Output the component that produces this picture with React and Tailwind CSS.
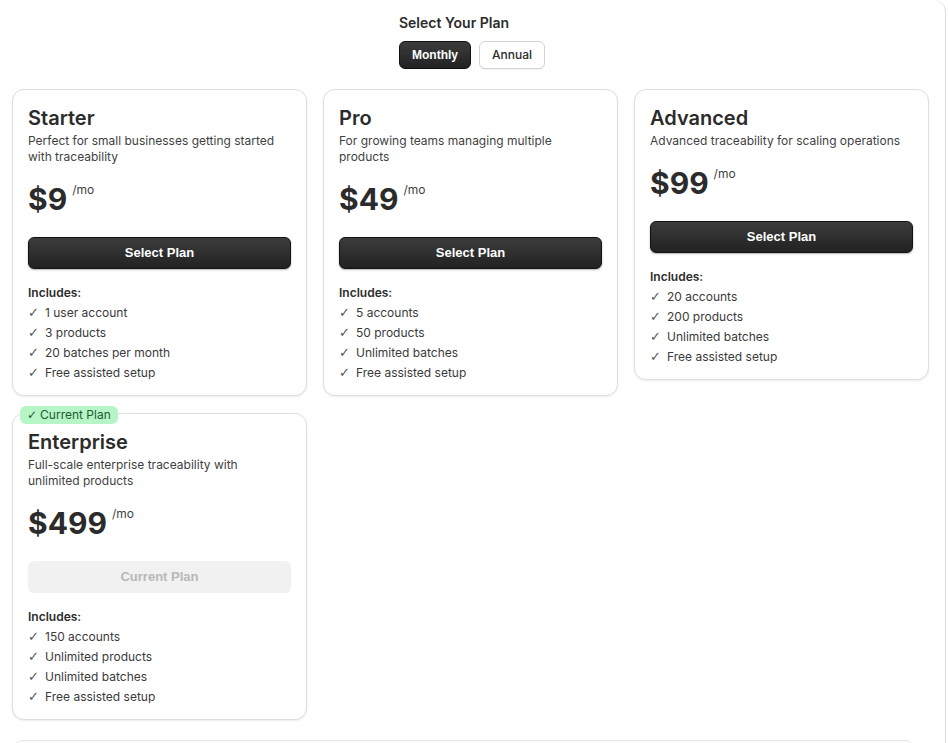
import React from "react";

const plans = [
  {
    name: "Starter",
    desc: "Perfect for small businesses getting started with traceability",
    price: "$9",
    features: ["1 user account", "3 products", "20 batches per month", "Free assisted setup"],
  },
  {
    name: "Pro",
    desc: "For growing teams managing multiple products",
    price: "$49",
    features: ["5 accounts", "50 products", "Unlimited batches", "Free assisted setup"],
  },
  {
    name: "Advanced",
    desc: "Advanced traceability for scaling operations",
    price: "$99",
    features: ["20 accounts", "200 products", "Unlimited batches", "Free assisted setup"],
  },
  {
    name: "Enterprise",
    desc: "Full-scale enterprise traceability with unlimited products",
    price: "$499",
    features: ["150 accounts", "Unlimited products", "Unlimited batches", "Free assisted setup"],
    current: true,
  },
];

function Card({ plan }) {
  return (
    <div className="relative rounded-xl border border-[#dedede] bg-white px-[15px] pt-[14px] pb-[12px] shadow-[0_1px_2px_rgba(0,0,0,0.08)]">
      {plan.current && (
        <div className="absolute left-[7px] top-[-8px] flex h-[18px] items-center rounded-md bg-[#b6f5c6] px-[7px] text-[12px] leading-none text-[#1e5b33]">
          <span className="mr-[3px] font-['DejaVu_Sans',sans-serif] text-[12px]">✓</span>Current Plan
        </div>
      )}
      <div className="text-[20px] font-semibold leading-7 text-[#2b2b2b]">{plan.name}</div>
      <div className="mt-[1px] text-[12px] leading-4 text-[#3f3f3f]">{plan.desc}</div>
      <div className="mt-[14px] flex items-start">
        <span className="text-[30px] font-bold leading-[40px] text-[#2b2b2b]">{plan.price}</span>
        <span className="ml-[5px] mt-[2px] text-[12px] text-[#3f3f3f]">/mo</span>
      </div>
      {plan.current ? (
        <div className="mt-[18px] flex h-8 items-center justify-center rounded-md bg-[#f1f1f1] font-['Liberation_Sans',sans-serif] text-[13px] font-bold text-[#b8b8b8]">
          Current Plan
        </div>
      ) : (
        <div className="mt-[18px] flex h-8 items-center justify-center rounded-md border border-[#111] bg-gradient-to-b from-[#3c3c3c] to-[#222] font-['Liberation_Sans',sans-serif] text-[13px] font-bold text-white shadow-[0_1px_2px_rgba(0,0,0,0.3)]">
          Select Plan
        </div>
      )}
      <div className="mt-[14px] text-[12px] font-semibold leading-5 text-[#2b2b2b]">Includes:</div>
      <ul className="text-[12px] leading-5 text-[#3a3a3a]">
        {plan.features.map((f) => (
          <li key={f} className="flex">
            <span className="w-[17px] font-['DejaVu_Sans',sans-serif] text-[13px] font-light text-[#555]">✓</span>
            <span>{f}</span>
          </li>
        ))}
      </ul>
    </div>
  );
}

export default function App() {
  return (
    <div className="min-h-[743px] bg-white font-['Inter',sans-serif] text-[#2b2b2b]">
      <div className="min-h-[743px] w-[946px] rounded-tr-xl border-r border-[#dcdcdc] pl-3 pr-4 pt-[14px]">
        <div className="flex justify-center">
          <div className="ml-[3px]">
            <div className="text-[14px] font-semibold leading-[18px] text-[#2b2b2b]">Select Your Plan</div>
            <div className="mt-[9px] flex gap-2">
              <div className="flex h-[28px] items-center rounded-md border border-[#111] bg-gradient-to-b from-[#3c3c3c] to-[#222] px-3 font-['Liberation_Sans',sans-serif] text-[12px] font-bold text-white">
                Monthly
              </div>
              <div className="flex h-[28px] items-center rounded-md border border-[#d4d4d4] bg-white px-3 text-[12px] font-medium text-[#2b2b2b] shadow-[0_1px_1px_rgba(0,0,0,0.05)]">
                Annual
              </div>
            </div>
          </div>
        </div>
        <div className="mt-[20px] grid grid-cols-3 items-start gap-x-[16px] gap-y-[17px]">
          {plans.map((p) => (
            <Card key={p.name} plan={p} />
          ))}
        </div>
        <div className="mt-5 ml-[2px] mr-[16px] h-4 rounded-t-lg border-t border-[#e8e8e8] bg-[#fafafa]" />
      </div>
    </div>
  );
}
